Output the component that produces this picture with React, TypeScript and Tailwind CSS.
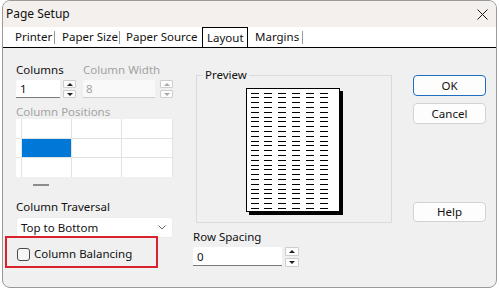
import React from 'react';

function Spin({ disabled = false, size = 'normal' }: { disabled?: boolean; size?: 'normal' | 'wide' }) {
  const fill = disabled ? '#a8a8a8' : '#1f1f1f';
  const box =
    'flex items-center justify-center border border-[#cdcdcd] bg-[#fdfdfd] rounded-[1px] ' +
    (size === 'wide' ? 'w-[14px] h-[9px]' : 'w-[13px] h-[8px]');
  return (
    <div className="flex flex-col gap-[2px]">
      <div className={box}>
        <svg width="6" height="3" viewBox="0 0 6 3">
          <path d="M0 3 L3 0 L6 3 Z" fill={fill} />
        </svg>
      </div>
      <div className={box}>
        <svg width="6" height="3" viewBox="0 0 6 3">
          <path d="M0 0 L3 3 L6 0 Z" fill={fill} />
        </svg>
      </div>
    </div>
  );
}

function Paper() {
  const cols = [5, 18, 32, 46, 60, 74];
  const rows = Array.from({ length: 25 }, (_, i) => 4.5 + i * 4.8);
  return (
    <svg width="98" height="128" viewBox="0 0 98 128">
      <rect x="3" y="3" width="94" height="124" fill="#000" />
      <rect x="0.5" y="0.5" width="93" height="123" fill="#fff" stroke="#000" />
      {rows.map(y =>
        cols.map(x => (
          <line key={`${x}-${y}`} x1={x} x2={x + 8} y1={Math.round(y) + 0.5} y2={Math.round(y) + 0.5} stroke="#000" strokeWidth="1" />
        ))
      )}
    </svg>
  );
}

export default function App() {
  return (
    <div className="relative w-[500px] h-[291px] bg-white font-['Noto_Sans','Open_Sans',sans-serif] text-[11.5px] text-[#111] leading-[16px]">
      <div className="ml-[2px] w-[495px] h-[288px] border border-[#9a9a9a] rounded-[8px] overflow-hidden bg-[#f0f0f0] flex flex-col">
        {/* title bar */}
        <div className="h-[26px] shrink-0 bg-[#f3f0ed] flex items-center justify-between pl-[3px] pr-[8px]">
          <span className="text-[12px]">Page Setup</span>
          <svg width="11" height="11" viewBox="0 0 11 11">
            <path d="M0.5 0.5 L10.5 10.5 M10.5 0.5 L0.5 10.5" stroke="#1a1a1a" strokeWidth="1" />
          </svg>
        </div>

        {/* tabs */}
        <div className="h-[21px] shrink-0 bg-white border-b border-black flex items-stretch whitespace-nowrap">
          <div className="w-[51px] shrink-0 pl-[12px] flex items-center">Printer</div>
          <div className="w-px h-[13px] shrink-0 self-center bg-[#9a9a9a]" />
          <div className="w-[64px] shrink-0 pl-[7px] flex items-center">Paper Size</div>
          <div className="w-px h-[13px] shrink-0 self-center bg-[#9a9a9a]" />
          <div className="w-[82px] shrink-0 pl-[6px] flex items-center">Paper Source</div>
          <div className="w-[46px] shrink-0 pl-[4px] flex items-center border-l border-r border-t border-black">Layout</div>
          <div className="w-[54px] shrink-0 pl-[7px] flex items-center">Margins</div>
          <div className="w-px h-[13px] shrink-0 self-center bg-[#9a9a9a]" />
        </div>

        {/* body */}
        <div className="flex pl-[13px]">
          {/* left column */}
          <div className="w-[157px] flex flex-col pt-[14px]">
            <div className="flex">
              <div className="w-[67px] flex flex-col">
                <span>Columns</span>
                <div className="flex gap-[3px] mt-[2px]">
                  <div className="w-[44px] h-[18px] bg-white border-b border-[#7a7a7a] rounded-t-[2px] pl-[4px] leading-[18px]">1</div>
                  <Spin />
                </div>
              </div>
              <div className="flex flex-col">
                <span className="text-[#a3a3a3]">Column Width</span>
                <div className="flex gap-[5px] mt-[2px]">
                  <div className="w-[72px] h-[18px] bg-[#f9f9f9] border-b border-[#cfcfcf] rounded-t-[2px] pl-[3px] leading-[18px] text-[#a3a3a3]">8</div>
                  <Spin disabled />
                </div>
              </div>
            </div>

            <span className="mt-[6px] leading-[15px] text-[#a3a3a3]">Column Positions</span>
            <div className="grid grid-cols-[6px_50px_50px_51px] grid-rows-[20px_19px_19px] w-[157px] h-[58px] bg-white">
              {Array.from({ length: 12 }, (_, i) => {
                const row = Math.floor(i / 4);
                const col = i % 4;
                const selected = row === 1 && col === 1;
                return (
                  <div
                    key={i}
                    className={
                      (row < 2 ? 'border-b ' : '') +
                      'border-r border-[#e2e2e2] ' +
                      (selected ? 'bg-[#0078d7]' : 'bg-white')
                    }
                  />
                );
              })}
            </div>
            <div className="mt-[7px] ml-[17px] w-[16px] h-[2px] bg-[#8c8c8c]" />

            <span className="mt-[13px]">Column Traversal</span>
            <div className="mt-[2px] h-[21px] w-[157px] bg-white border border-[#ececec] rounded-[3px] flex items-center justify-between pl-[4px] pr-[6px]">
              <span>Top to Bottom</span>
              <svg width="8" height="5" viewBox="0 0 8 5">
                <path d="M0.5 0.5 L4 4 L7.5 0.5" fill="none" stroke="#6b6b6b" strokeWidth="1" />
              </svg>
            </div>
            <div className="mt-[8px] ml-[1px] flex items-center gap-[4px]">
              <div className="w-[13px] h-[13px] rounded-[3px] border border-[#4a4a4a] bg-[#f6f6f6]" />
              <span>Column Balancing</span>
            </div>
          </div>

          {/* middle column */}
          <div className="ml-[20px] w-[199px] flex flex-col">
            <fieldset className="ml-[3px] mt-[19px] w-[196px] h-[156px] border border-[#dadada] flex flex-col items-center">
              <legend className="ml-[6px] px-[2px] leading-[16px]">Preview</legend>
              <div className="mt-[5px] ml-[2px]">
                <Paper />
              </div>
            </fieldset>
            <span className="mt-[6px]">Row Spacing</span>
            <div className="mt-[2px] flex gap-[3px]">
              <div className="w-[89px] h-[19px] bg-white border-b border-[#7a7a7a] rounded-t-[2px] pl-[4px] leading-[19px]">0</div>
              <Spin size="wide" />
            </div>
          </div>

          {/* right column */}
          <div className="ml-[21px] w-[73px] flex flex-col">
            <button className="mt-[27px] h-[21px] w-[73px] bg-[#fdfdfd] border border-[#1f6fc0] rounded-[4px] leading-[19px]">OK</button>
            <button className="mt-[7px] h-[21px] w-[73px] bg-[#fdfdfd] border border-[#d3d3d3] rounded-[4px] leading-[19px]">Cancel</button>
            <button className="mt-[78px] h-[20px] w-[73px] bg-[#fdfdfd] border border-[#d3d3d3] rounded-[4px] leading-[18px]">Help</button>
          </div>
        </div>
      </div>

      {/* highlight annotation */}
      <div className="absolute left-[5px] top-[236px] w-[153px] h-[32px] border-2 border-[#d8222e]" />
    </div>
  );
}
